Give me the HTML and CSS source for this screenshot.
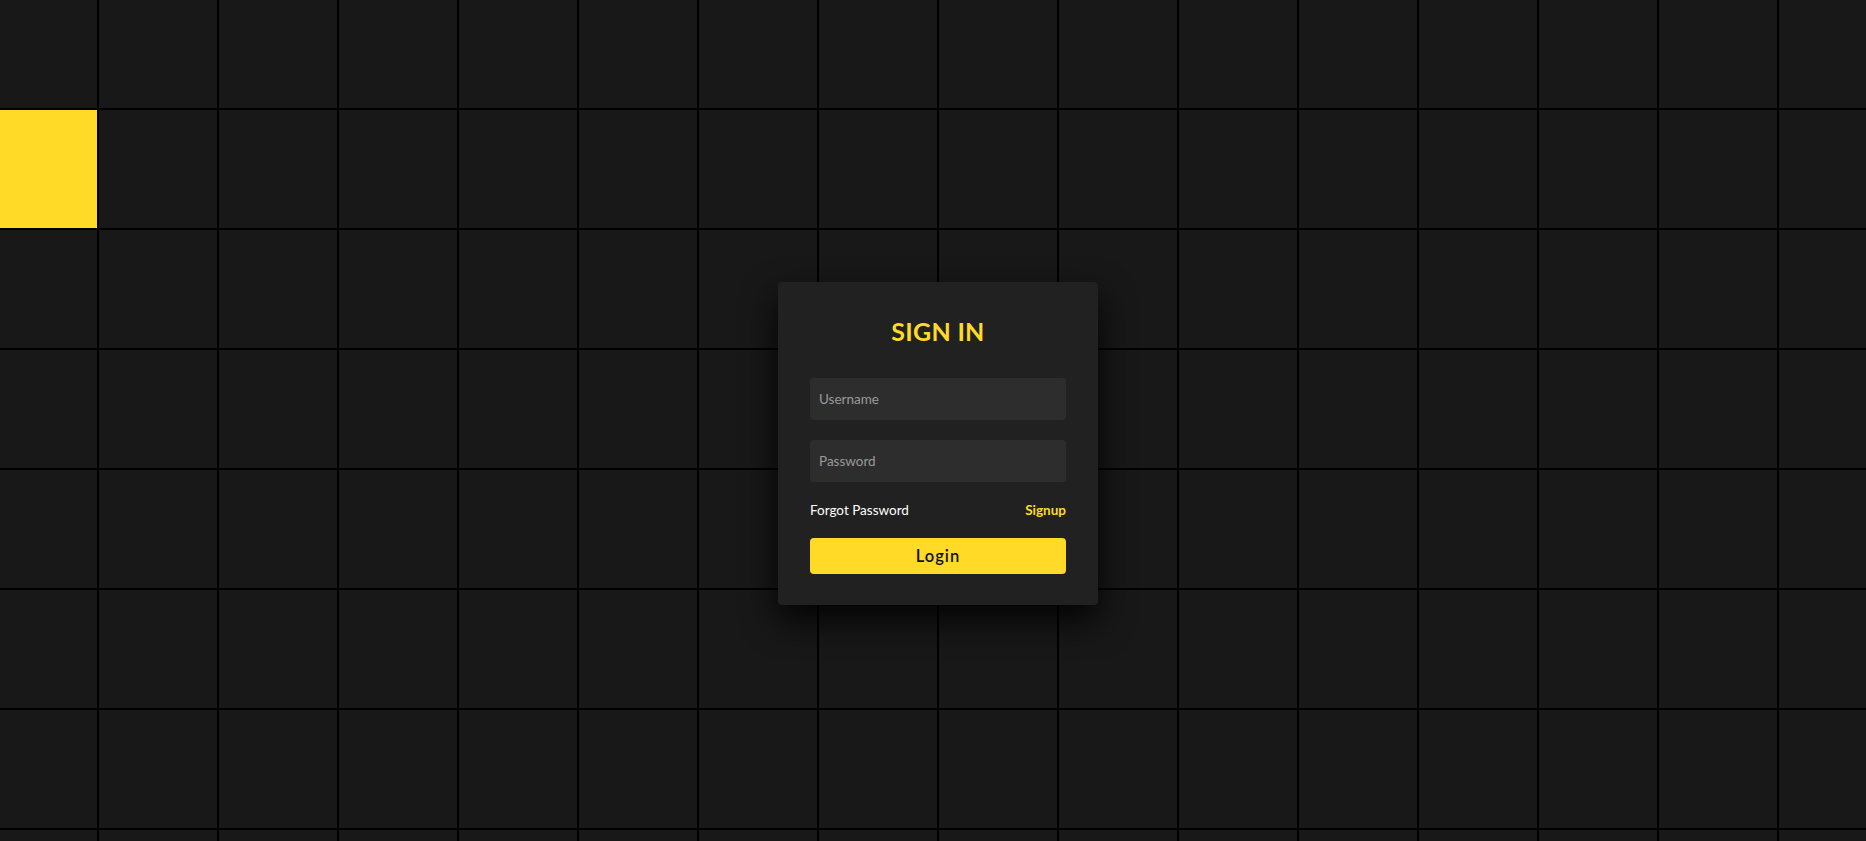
FILE: index.html
```html
<!DOCTYPE html>
<html lang="en">
<head>
<meta charset="utf-8">
<title>Sign In</title>
<link rel="stylesheet" href="styles.css">
</head>
<body>
<section class="grid">
<span></span><span></span><span></span><span></span><span></span><span></span><span></span><span></span><span></span><span></span><span></span><span></span><span></span><span></span><span></span><span></span>
<span class="lit"></span><span></span><span></span><span></span><span></span><span></span><span></span><span></span><span></span><span></span><span></span><span></span><span></span><span></span><span></span><span></span>
<span></span><span></span><span></span><span></span><span></span><span></span><span></span><span></span><span></span><span></span><span></span><span></span><span></span><span></span><span></span><span></span>
<span></span><span></span><span></span><span></span><span></span><span></span><span></span><span></span><span></span><span></span><span></span><span></span><span></span><span></span><span></span><span></span>
<span></span><span></span><span></span><span></span><span></span><span></span><span></span><span></span><span></span><span></span><span></span><span></span><span></span><span></span><span></span><span></span>
<span></span><span></span><span></span><span></span><span></span><span></span><span></span><span></span><span></span><span></span><span></span><span></span><span></span><span></span><span></span><span></span>
<span></span><span></span><span></span><span></span><span></span><span></span><span></span><span></span><span></span><span></span><span></span><span></span><span></span><span></span><span></span><span></span>
<span></span><span></span><span></span><span></span><span></span><span></span><span></span><span></span><span></span><span></span><span></span><span></span><span></span><span></span><span></span><span></span>
</section>
<div class="signin">
  <h2 class="title">SIGN IN</h2>
  <form class="form">
    <div class="field"><input type="text" placeholder="Username"></div>
    <div class="field"><input type="password" placeholder="Password"></div>
    <div class="links"><a href="#" class="forgot">Forgot Password</a><a href="#" class="signup">Signup</a></div>
    <button type="button" class="login">Login</button>
  </form>
</div>
</body>
</html>
```
FILE: styles.css
```css
* { box-sizing: border-box; }
html, body { margin: 0; padding: 0; }
body {
  width: 1866px;
  height: 841px;
  overflow: hidden;
  background: #000;
  font-family: "Lato", "Liberation Sans", sans-serif;
  position: relative;
}
.grid {
  display: grid;
  grid-template-columns: repeat(16, 118px);
  grid-auto-rows: 118px;
  gap: 2px;
  width: 1887px;
  height: 851px;
  overflow: hidden;
  margin: -10px 0 0 -21px;
}
.grid span { display: block; background: #181818; }
.grid span.lit { background: #ffda27; }
.signin {
  position: absolute;
  left: 778px;
  top: 282px;
  width: 320px;
  height: 323px;
  background: #212121;
  border-radius: 4px;
  padding: 34px 32px 31px;
  box-shadow: 0 15px 35px rgba(0, 0, 0, 0.9);
  display: flex;
  flex-direction: column;
  gap: 32px;
}
.title {
  margin: 0;
  font-size: 25px;
  line-height: 30px;
  font-weight: 700;
  color: #ffda27;
  text-align: center;
  letter-spacing: 0.3px;
}
.form { display: flex; flex-direction: column; gap: 20px; }
.field input {
  display: block;
  width: 100%;
  height: 42px;
  border: none;
  outline: none;
  border-radius: 4px;
  background: #2d2d2d;
  color: #fff;
  padding: 0 9px;
  font-family: inherit;
  font-size: 13.5px;
}
.field input::placeholder { color: #9a9a9a; }
.links {
  display: flex;
  justify-content: space-between;
  font-size: 13.5px;
  line-height: 16px;
}
.links a { text-decoration: none; }
.forgot { color: #fff; }
.signup { color: #ffda27; font-weight: 700; }
.login {
  height: 36px;
  border: none;
  border-radius: 4px;
  background: #ffda27;
  color: #111;
  font-family: inherit;
  font-size: 16.5px;
  font-weight: 600;
  letter-spacing: 1px;
  cursor: pointer;
}
```
